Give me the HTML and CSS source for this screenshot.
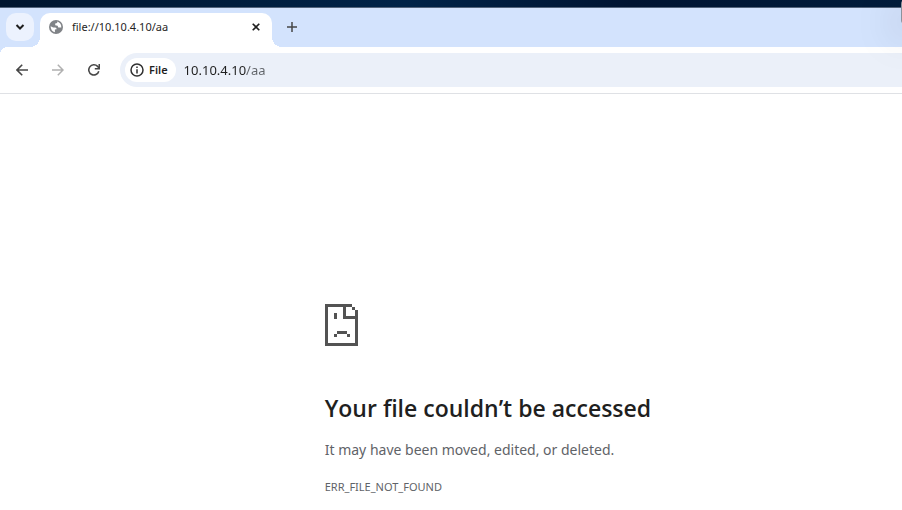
FILE: index.html
```html
<!DOCTYPE html>
<html lang="en">
<head>
    <meta charset="UTF-8">
    <meta name="viewport" content="width=device-width, initial-scale=1.0">
    <title>file://10.10.4.10/aa</title>
    <link rel="stylesheet" href="styles.css">
</head>
<body>
    <div class="desktop"></div>

    <div class="tab-strip">
        <button class="tab-search" aria-label="Search tabs">
            <svg width="10" height="10" viewBox="0 0 10 10"><path d="M1.5 3l3.5 3.5L8.5 3" fill="none" stroke="#1f1f1f" stroke-width="2"/></svg>
        </button>
        <div class="tab">
            <svg class="globe" width="14" height="14" viewBox="0 0 14 14">
                <circle cx="7" cy="7" r="7" fill="#808387"/>
                <path d="M1.6 6.2L4.2 7.4H6.2Q7.8 7.6 7.6 9.2L5.9 9.6V12.2Q1.7 11 1.6 6.2Z" fill="#fff"/>
                <path d="M8.2 1.6V3.1L6.2 3.6V5.2L8.6 5.7 9.3 7.6H12.3Q12.6 3.3 8.2 1.6Z" fill="#fff"/>
            </svg>
            <span class="tab-title">file://10.10.4.10/aa</span>
            <button class="tab-close" aria-label="Close tab">
                <svg width="8" height="8" viewBox="0 0 8 8"><path d="M.7 .7l6.6 6.6M7.3 .7L.7 7.3" fill="none" stroke="#1f1f1f" stroke-width="1.6"/></svg>
            </button>
        </div>
        <button class="new-tab" aria-label="New tab">
            <svg width="10" height="10" viewBox="0 0 10 10"><path d="M5 0v10M0 5h10" fill="none" stroke="#474747" stroke-width="1.5"/></svg>
        </button>
    </div>

    <div class="toolbar">
        <button class="nav-button" aria-label="Back">
            <svg width="12" height="12" viewBox="0 0 12 12"><path d="M12 6H1.2M6.2 .8L1 6l5.2 5.2" fill="none" stroke="#474747" stroke-width="1.6"/></svg>
        </button>
        <button class="nav-button" aria-label="Forward" disabled>
            <svg width="12" height="12" viewBox="0 0 12 12"><path d="M0 6h10.8M5.8 .8L11 6l-5.2 5.2" fill="none" stroke="#b0b0b0" stroke-width="1.5"/></svg>
        </button>
        <button class="nav-button" aria-label="Reload">
            <svg width="12" height="12" viewBox="0 0 12 12"><path d="M10.8 7.3A5.1 5.1 0 1 1 9.6 2.4L11.3 4.3" fill="none" stroke="#474747" stroke-width="1.6"/><path d="M11.3 0V4.7H6.8" fill="none" stroke="#474747" stroke-width="1.6"/></svg>
        </button>
        <div class="omnibox">
            <button class="chip">
                <svg width="14" height="14" viewBox="0 0 14 14"><circle cx="7" cy="7" r="6" fill="none" stroke="#303030" stroke-width="1.5"/><path d="M7 6.2v4.2M7 3.6v1.5" fill="none" stroke="#303030" stroke-width="1.5"/></svg>
                File
            </button>
            <input class="url" type="text" value="10.10.4.10/aa" aria-label="Address" spellcheck="false">
        </div>
    </div>

    <main class="error-page">
        <svg class="sad-file" width="33" height="42" viewBox="0 0 33 42" shape-rendering="crispEdges" fill="#535353">
            <path d="M0 0H27V3H21V12H30V6H33V42H0ZM3 3V39H30V15H18V3Z" fill-rule="evenodd"/>
            <path d="M27 3h3v3h-3zM9 9h3v6H9zM12 27h10v3H12zM9 30h3v3H9zM22 30h3v3h-3z"/>
        </svg>
        <h1>Your file couldn’t be accessed</h1>
        <p>It may have been moved, edited, or deleted.</p>
        <div class="error-code">ERR_FILE_NOT_FOUND</div>
    </main>

    <div class="next-window"></div>
</body>
</html>
```
FILE: styles.css
```css
:root {
    --frame-color: #d3e3fd;
    --omnibox-color: #ebf0f9;
    --text-color: #1f1f1f;
    --muted-color: #5f6368;
}

* {
    margin: 0;
    padding: 0;
    box-sizing: border-box;
}

body {
    position: relative;
    min-height: 100vh;
    overflow: hidden;
    font-family: "Noto Sans", "Open Sans", sans-serif;
    color: var(--text-color);
    background-color: white;
}

button {
    display: flex;
    align-items: center;
    justify-content: center;
    border: none;
    background: none;
    font-family: inherit;
    color: inherit;
}

.desktop {
    height: 8px;
    background: linear-gradient(to right, #00152f, #002348 45%, #001432 70%, #001c3c);
    border-bottom: 1px solid #53647c;
}

.tab-strip {
    display: flex;
    height: 39px;
    padding: 5px 6px 0;
    background-color: var(--frame-color);
}

.tab-search {
    width: 28px;
    height: 28px;
    margin-right: 6px;
    border-radius: 10px;
    background-color: #ecf2fe;
}

.tab {
    position: relative;
    display: flex;
    align-items: center;
    width: 232px;
    padding: 0 8px 6px 9px;
    border-radius: 10px 10px 0 0;
    background-color: white;
}

/* curved feet on both sides of the active tab */
.tab::before,
.tab::after {
    content: "";
    position: absolute;
    bottom: 0;
    width: 10px;
    height: 10px;
}

.tab::before {
    right: 100%;
    background: radial-gradient(circle at 0 0, transparent 10px, white 10px);
}

.tab::after {
    left: 100%;
    background: radial-gradient(circle at 100% 0, transparent 10px, white 10px);
}

.tab-title {
    flex: 1;
    margin-left: 9px;
    font-size: 11px;
    line-height: 16px;
}

.tab-close {
    width: 16px;
    height: 16px;
}

.new-tab {
    width: 28px;
    height: 28px;
    margin-left: 6px;
}

.toolbar {
    position: relative;
    display: flex;
    align-items: center;
    gap: 8px;
    height: 47px;
    padding: 0 0 0 8px;
    border-bottom: 1px solid #dfe1e5;
    background-color: white;
}

.toolbar::before {
    content: "";
    position: absolute;
    top: 0;
    left: 0;
    width: 8px;
    height: 8px;
    background: radial-gradient(circle at 100% 100%, transparent 8px, var(--frame-color) 8px);
}

.nav-button {
    width: 28px;
    height: 28px;
}

.omnibox {
    display: flex;
    flex: 1;
    align-items: center;
    height: 34px;
    margin-left: 4px;
    padding-left: 5px;
    border-radius: 17px 0 0 17px;
    background-color: var(--omnibox-color);
}

.chip {
    gap: 5px;
    height: 24px;
    padding: 0 8px 0 5px;
    border-radius: 12px;
    background-color: white;
    font-size: 11px;
    font-weight: 600;
    line-height: 16px;
}

/* the host is dark, the path after it is dimmed */
.url {
    flex: 1;
    min-width: 0;
    margin-left: 8px;
    border: none;
    outline: none;
    font-family: inherit;
    font-size: 13px;
    line-height: 20px;
    color: transparent;
    background: linear-gradient(to right, var(--text-color) 62px, var(--muted-color) 62px);
    background-clip: text;
}

.error-page {
    width: 64%;
    margin-left: 36%;
    padding-top: 210px;
}

.sad-file {
    display: block;
}

h1 {
    margin-top: 46px;
    font-family: "Open Sans", "Noto Sans", sans-serif;
    font-size: 23px;
    font-weight: 600;
    line-height: 32px;
}

.error-page p {
    margin-top: 14px;
    font-size: 14px;
    line-height: 24px;
    color: var(--muted-color);
}

.error-code {
    margin-top: 16px;
    font-size: 11px;
    line-height: 18px;
    color: var(--muted-color);
}

/* edge of the window lying to the right, with its shadow */
.next-window {
    position: absolute;
    top: 0;
    right: -9px;
    width: 10px;
    height: 24px;
    border-radius: 4px;
    background-color: #8c929c;
    box-shadow: 0 10px 40px rgba(0, 0, 0, 0.4);
}
```
